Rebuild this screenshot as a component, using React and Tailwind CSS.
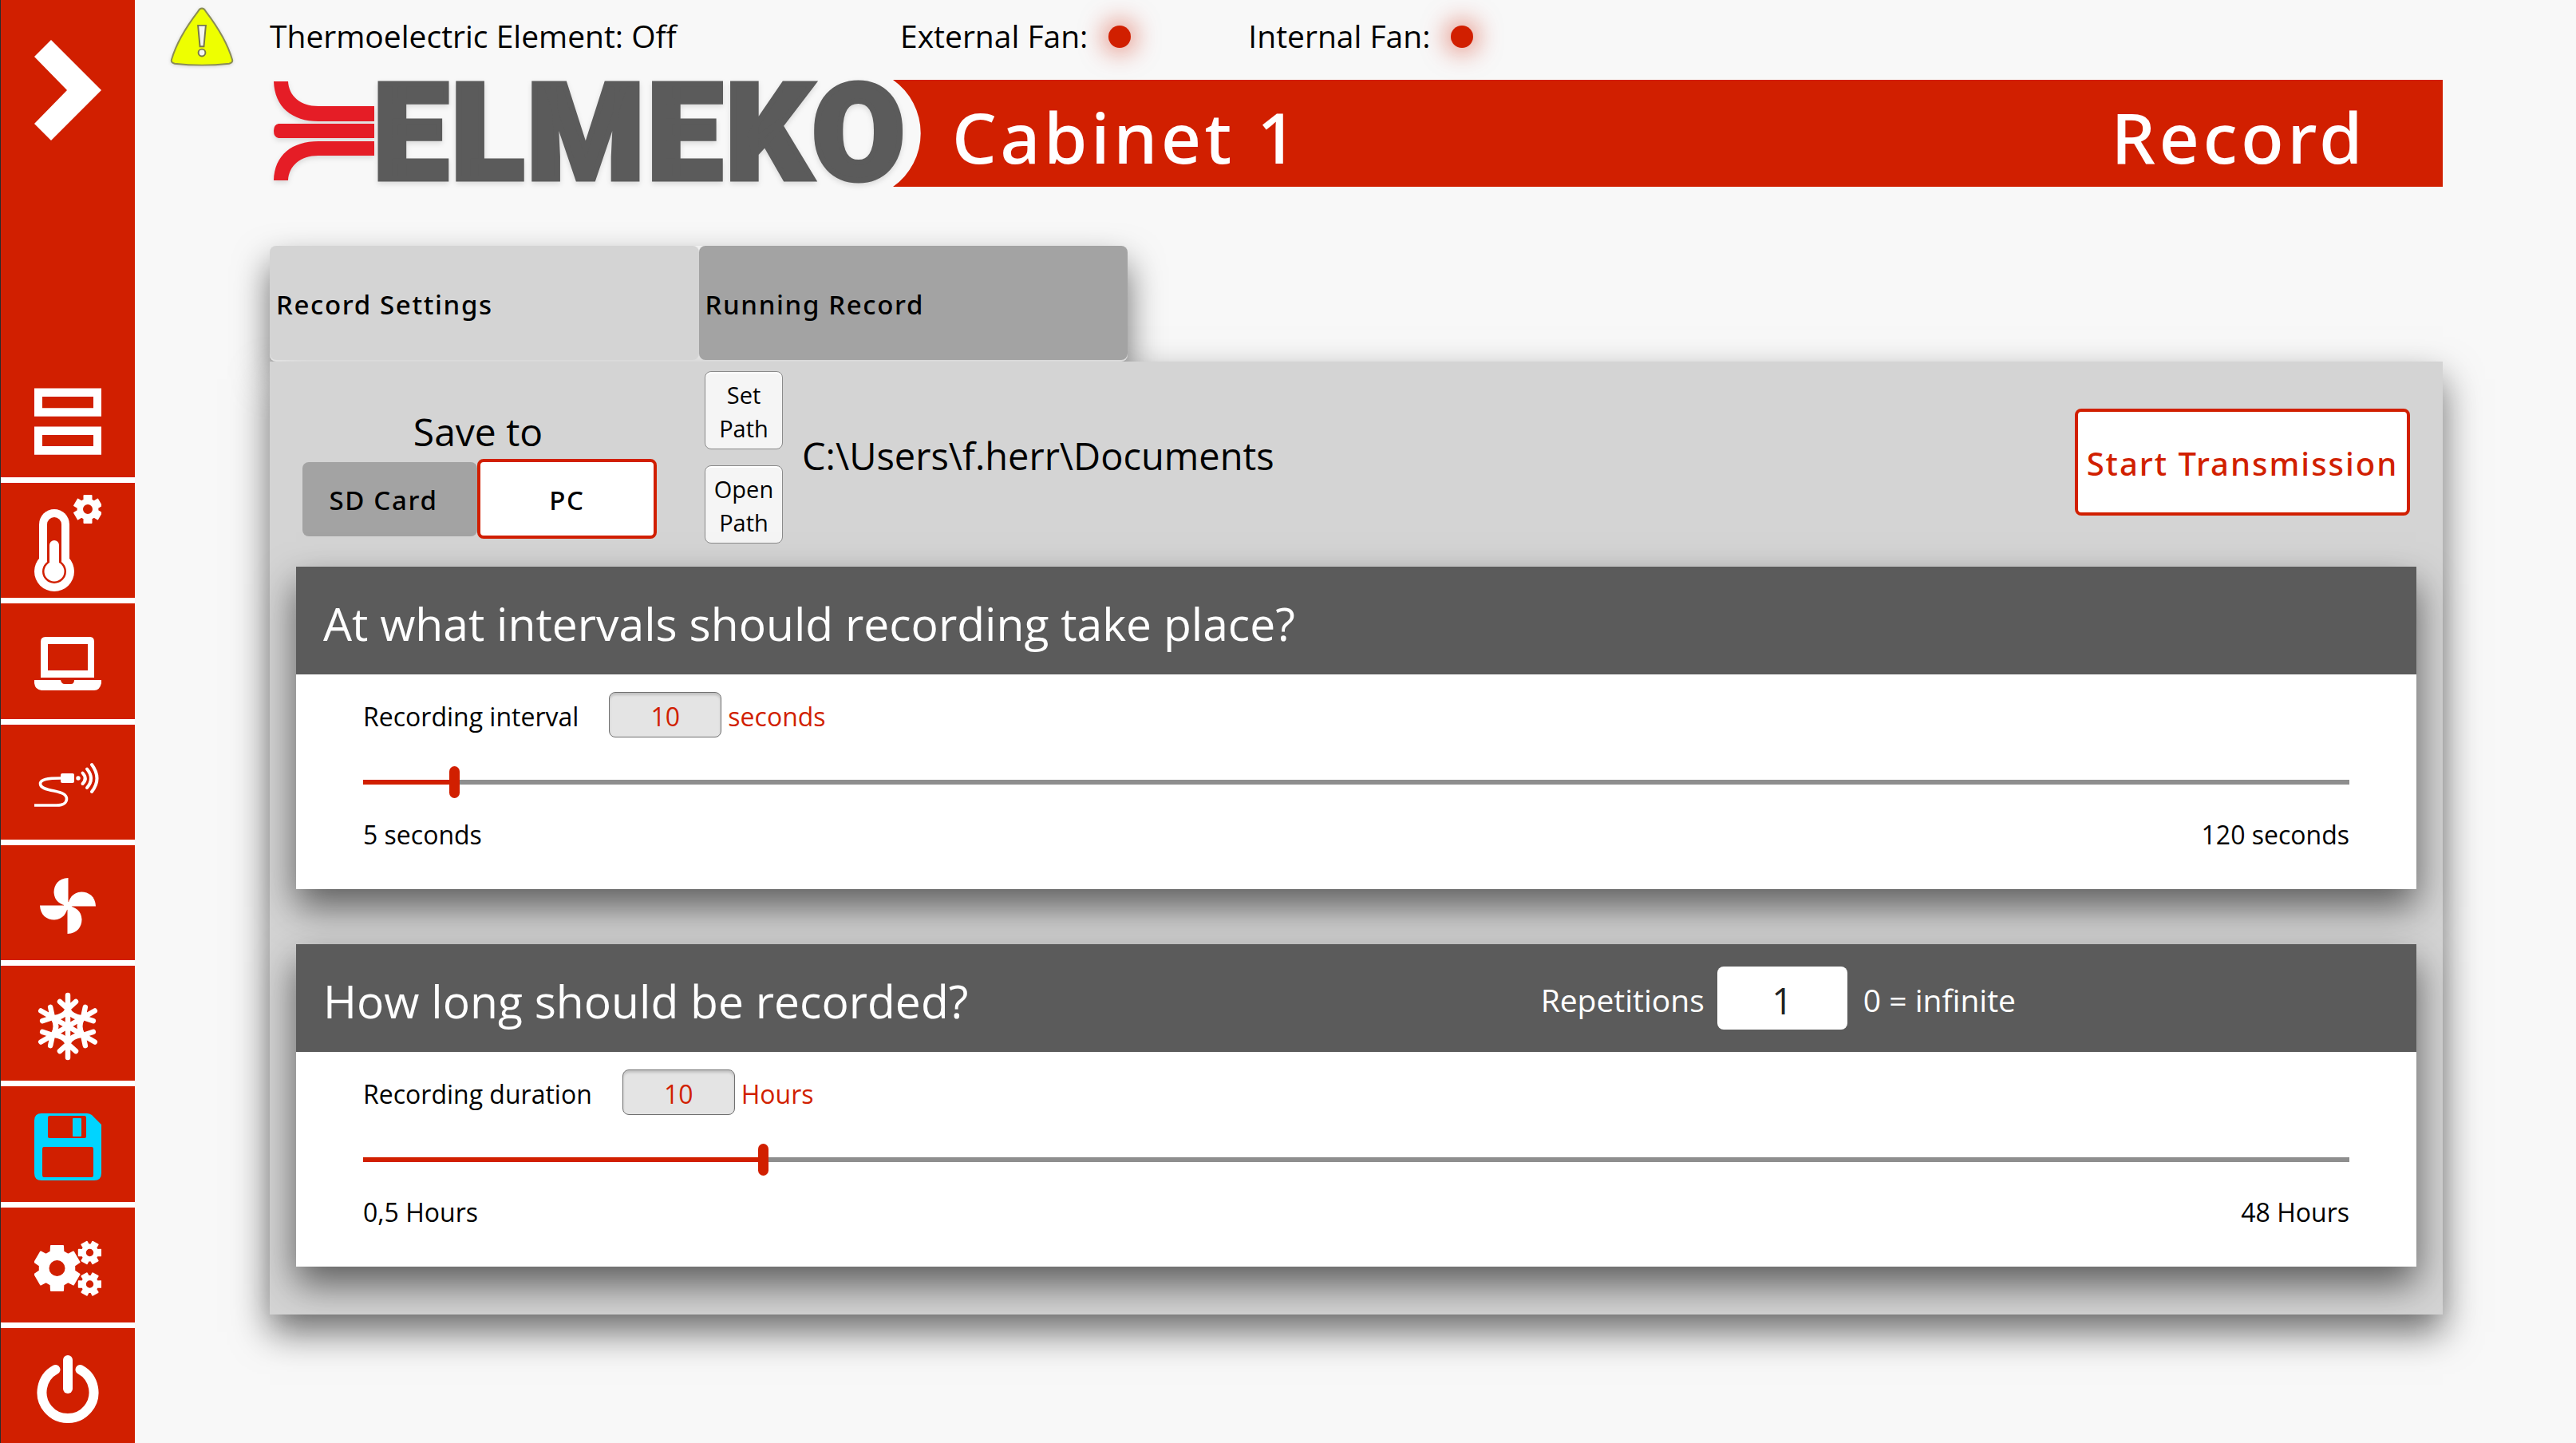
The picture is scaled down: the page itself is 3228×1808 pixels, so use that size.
import { useState } from "react";

const rad = (deg) => (deg * Math.PI) / 180;

// Six-toothed gear outline with a round hole in the middle.
function gearPath(cx, cy, outer, body, hole, start) {
  const points = [];
  for (let i = 0; i < 6; i += 1) {
    const a = start + i * 60;
    [
      [a - 21, body],
      [a - 15, outer],
      [a + 15, outer],
      [a + 21, body],
    ].forEach(([deg, r]) => {
      points.push(`${(cx + r * Math.cos(rad(deg))).toFixed(2)} ${(cy + r * Math.sin(rad(deg))).toFixed(2)}`);
    });
  }
  return `M${points.join("L")}Z M${cx - hole} ${cy}a${hole} ${hole} 0 1 0 ${hole * 2} 0a${hole} ${hole} 0 1 0 ${-hole * 2} 0Z`;
}

function Gear({ cx, cy, outer, body, hole, start }) {
  return (
    <path
      d={gearPath(cx, cy, outer - 1, body - 1, hole + 1, start)}
      fillRule="evenodd"
      fill="currentColor"
      stroke="currentColor"
      strokeWidth="2"
      strokeLinejoin="round"
    />
  );
}

function Icon({ children }) {
  return (
    <svg viewBox="0 0 84 126" className="h-[126px] w-[84px]" fill="none" aria-hidden="true">
      {children}
    </svg>
  );
}

function OverviewIcon() {
  return (
    <Icon>
      <path fill="currentColor" fillRule="evenodd" d="M0 21H84V51H0Z M10 30V42H74V30Z M0 62H84V92H0Z M10 71V83H74V71Z" transform="translate(0 -3) scale(1 1.17)" />
    </Icon>
  );
}

function ThermometerIcon() {
  return (
    <Icon>
      <g fill="currentColor">
        <rect x="6" y="20" width="38" height="90" rx="19" />
        <circle cx="25" cy="98" r="25" />
      </g>
      <g fill="#d11f00">
        <rect x="16" y="30" width="18" height="64" rx="9" />
        <circle cx="25" cy="98" r="15" />
      </g>
      <g fill="currentColor">
        <rect x="19" y="59" width="12" height="40" rx="6" />
        <circle cx="25" cy="98" r="12.500" />
      </g>
      <Gear cx={67} cy={20} outer={18.5} body={13.500} hole={6} start={-90} />
    </Icon>
  );
}

function LaptopIcon() {
  return (
    <Icon>
      <path
        fill="currentColor"
        fillRule="evenodd"
        d="M14 29H70Q75 29 75 35V80H8V35Q8 29 14 29Z M17 38V71H67V38Z"
      />
      <path
        fill="currentColor"
        d="M0 83H33Q34 88 38 88H46Q50 88 50 83H84V87Q82 96 75 96H9Q1 95 0 87Z"
      />
    </Icon>
  );
}

function SensorIcon() {
  return (
    <Icon>
      <path
        d="M0 88H28C37 88 40.500 84 40.500 80C40.500 74 34 72 25 70C14 68 7.500 66 7.500 61C7.500 55.500 16 54 33 54"
        stroke="currentColor"
        strokeWidth="3.600"
      />
      <rect x="33" y="48" width="17" height="12" rx="2" fill="currentColor" />
      <circle cx="55" cy="54" r="2.700" fill="currentColor" />
      <g stroke="currentColor" strokeWidth="4" strokeLinecap="round">
        <path d="M60.500 47.500Q67 54.500 60.500 61" />
        <path d="M66 42.500Q76 54.500 66 66" />
        <path d="M72 37Q85 54.500 72 71" />
      </g>
    </Icon>
  );
}

function FanIcon() {
  const blade = "M42.500 63V28C30 28.500 24.500 37 24.500 46C25 57 33 62 42 63Z";
  return (
    <Icon>
      {[0, 90, 180, 270].map((turn) => (
        <path key={turn} d={blade} fill="currentColor" transform={`rotate(${turn} 42 63)`} />
      ))}
      <circle cx="42" cy="63" r="5" fill="currentColor" />
    </Icon>
  );
}

function SnowflakeIcon() {
  return (
    <Icon>
      <g stroke="currentColor" strokeWidth="6.500" strokeLinecap="round">
        {[0, 60, 120, 180, 240, 300].map((turn) => (
          <path key={turn} d="M42 63V24M42 41L32 32M42 41L52 32" transform={`rotate(${turn} 42 63)`} />
        ))}
        <path
          d="M42 42Q46 51 60 52.500Q54 63 60 73.500Q46 75 42 84Q38 75 24 73.500Q30 63 24 52.500Q38 51 42 42Z"
          strokeWidth="7"
          strokeLinejoin="round"
        />
      </g>
    </Icon>
  );
}

function SaveIcon() {
  return (
    <Icon>
      <path
        fill="currentColor"
        fillRule="evenodd"
        d="M9 21H66Q69 21 72 23L84 35V96Q84 105 75 105H9Q0 105 0 96V30Q0 21 9 21Z M19 24Q17 24 17 27V50Q17 52 19 52H63Q65 52 65 50V27Q65 24 63 24Z M12 63Q10 63 10 66V98Q10 101 12 101H72Q74 101 74 98V66Q74 63 72 63Z"
      />
      <rect x="48" y="27" width="11" height="23" rx="1" fill="currentColor" />
    </Icon>
  );
}

function SettingsIcon() {
  return (
    <Icon>
      <Gear cx={28.5} cy={63} outer={30} body={23} hole={10} start={-90} />
      <Gear cx={69.5} cy={43.5} outer={15.200} body={11} hole={4.7} start={0} />
      <Gear cx={69.5} cy={83} outer={15.200} body={11} hole={4.7} start={0} />
    </Icon>
  );
}

function PowerIcon() {
  return (
    <Icon>
      <g stroke="currentColor" strokeWidth="12" strokeLinecap="round">
        <path d="M26.500 39A32.500 32.500 0 1 0 57.500 39" />
        <path d="M42 27V63" />
      </g>
    </Icon>
  );
}

const navItems = [
  { label: "Temperature settings", icon: ThermometerIcon },
  { label: "Computer", icon: LaptopIcon },
  { label: "Sensors", icon: SensorIcon },
  { label: "Fans", icon: FanIcon },
  { label: "Cooling", icon: SnowflakeIcon },
  { label: "Record", icon: SaveIcon, active: true },
  { label: "Settings", icon: SettingsIcon },
  { label: "Power", icon: PowerIcon },
];

function Sidebar() {
  return (
    <aside className="flex w-[169px] shrink-0 flex-col justify-between border-l border-[#2b2b2b] bg-[#d11f00] text-white">
      <button type="button" aria-label="Expand menu" className="flex h-[225px] items-center justify-center">
        <svg viewBox="0 0 84 126" className="h-[126px] w-[84px]" aria-hidden="true">
          <path d="M21 0L84 63L21 126L0 105L41 63L0 21Z" fill="currentColor" />
        </svg>
      </button>
      <nav className="flex h-[1363px] flex-col">
        <button type="button" aria-label="Overview" className="flex h-[153px] items-center justify-center pt-3">
          <OverviewIcon />
        </button>
        {navItems.map(({ label, icon: Glyph, active }) => (
          <button
            key={label}
            type="button"
            aria-label={label}
            className={
              active
                ? "flex min-h-0 flex-1 items-center justify-center border-t-[7px] border-white pt-2 text-[#00d4ff]"
                : "flex min-h-0 flex-1 items-center justify-center border-t-[7px] border-white pt-2"
            }
          >
            <Glyph />
          </button>
        ))}
      </nav>
    </aside>
  );
}

function WarningIcon() {
  return (
    <svg viewBox="0 0 82 78" className="h-[77px] w-20 drop-shadow-sm" role="img" aria-label="Warning">
      <path
        d="M41 2Q44 2 46 6Q72 40 80 68Q81 72 76 73Q41 77 6 73Q1 72 2 68Q10 40 36 6Q38 2 41 2Z"
        fill="#eeff00"
        stroke="#8a8c55"
        strokeWidth="2"
      />
      <path d="M36 24H46L43.500 51H38.500Z" fill="#f4f4f4" stroke="#77784a" strokeWidth="2" />
      <circle cx="41" cy="59" r="4.500" fill="#f4f4f4" stroke="#77784a" strokeWidth="2" />
    </svg>
  );
}

function FanStatus({ label }) {
  return (
    <div className="flex items-center gap-[26px]">
      <span className="pb-1">{label}</span>
      <span className="size-7 rounded-full bg-[#d11f00] shadow-[0_0_32px_4px_rgba(209,31,0,0.6)]" />
    </div>
  );
}

function Logo() {
  return (
    <svg viewBox="0 0 781 134" className="h-[134px] w-[781px] shrink-0 overflow-visible drop-shadow-md" role="img" aria-label="ELMEKO">
      <g fill="#e51d26">
        <path d="M5 2H23C24 20 38 33 61 33H131V52H61C28 52 6 34 5 2Z" />
        <path d="M11 55H131V73H11Q5 72 5 64Q5 56 11 55Z" />
        <path d="M5 126H23C24 108 38 95 61 95H131V77H61C28 77 6 94 5 126Z" />
      </g>
      <text
        x="130"
        y="124"
        fill="#5b5b5b"
        stroke="#5b5b5b"
        strokeWidth="7"
        fontFamily="Roboto, sans-serif"
        fontWeight="900"
        fontSize="167"
      >
        ELMEKO
      </text>
    </svg>
  );
}

function Header() {
  return (
    <header className="flex font-['Noto_Sans','Open_Sans',sans-serif] text-[88px] font-medium leading-none tracking-wider text-white">
      <Logo />
      <svg viewBox="0 0 36 134" className="h-[134px] w-9 shrink-0" aria-hidden="true">
        <path d="M0 0H36V134H0A82 82 0 0 0 0 0Z" fill="#d11f00" />
      </svg>
      <div className="flex min-w-0 flex-1 items-center justify-between bg-[#d11f00] pt-2 pr-24 pl-[38px]">
        <span>Cabinet 1</span>
        <h1>Record</h1>
      </div>
    </header>
  );
}

const cardShadow = "shadow-[0_22px_44px_rgba(0,0,0,0.56)]";

function Card({ title, extra, children }) {
  return (
    <section className={`${cardShadow} bg-white`}>
      <div className="flex h-[135px] items-center bg-[#5b5b5b] px-[34px] text-white">
        <h2 className="pt-2 text-[57px] leading-none">{title}</h2>
        {extra}
      </div>
      {children}
    </section>
  );
}

function RangeField({ id, label, unit, min, max, step, value, onChange, minLabel, maxLabel }) {
  const percent = ((value - min) / (max - min)) * 100;
  return (
    <div className="px-[84px] pt-[22px] pb-11 text-[32px] text-black">
      <div className="flex h-[57px] items-center">
        <label htmlFor={id} className="pt-1">
          {label}
        </label>
        <input
          type="text"
          aria-label={`${label} value`}
          value={value}
          onChange={(event) => onChange(Number(event.target.value) || min)}
          className="ml-[38px] h-[57px] w-[141px] rounded-lg border border-[#707070] bg-[#e4e4e4] pt-1 text-center text-[#d11f00] shadow-[inset_0_3px_3px_rgba(0,0,0,0.15)]"
        />
        <span className="ml-2 pt-1 text-[#d11f00]">{unit}</span>
      </div>
      <input
        id={id}
        type="range"
        min={min}
        max={max}
        step={step}
        value={value}
        onChange={(event) => onChange(Number(event.target.value))}
        style={{ backgroundImage: `linear-gradient(to right, #d11f00 ${percent}%, #8e8e8e ${percent}%)` }}
        className="mt-9 block h-10 w-full appearance-none bg-[length:100%_6px] bg-center bg-no-repeat [&::-webkit-slider-thumb]:h-10 [&::-webkit-slider-thumb]:w-[13px] [&::-webkit-slider-thumb]:appearance-none [&::-webkit-slider-thumb]:rounded-full [&::-webkit-slider-thumb]:bg-[#d11f00]"
      />
      <div className="mt-[22px] flex justify-between leading-[48px]">
        <span>{minLabel}</span>
        <span>{maxLabel}</span>
      </div>
    </div>
  );
}

const pathButton =
  "h-[98px] w-[98px] rounded-lg border border-[#8a8a8a] bg-[#f5f5f5] pt-1 text-[29px] leading-[42px] text-black shadow-[inset_0_2px_0_#ffffff]";

export default function App() {
  const [interval, setInterval] = useState(10);
  const [duration, setDuration] = useState(10);
  const [repetitions, setRepetitions] = useState("1");

  return (
    <div className="flex min-h-screen bg-[#f8f8f8] font-['Open_Sans','Noto_Sans',sans-serif] text-black">
      <Sidebar />
      <main className="min-w-0 flex-1 pr-[167px] pl-11">
        <div className="flex h-[92px] items-center text-[39px] leading-none">
          <WarningIcon />
          <span className="ml-[45px] w-[790px] pb-1">Thermoelectric Element: Off</span>
          <div className="flex gap-[147px]">
            <FanStatus label="External Fan:" />
            <FanStatus label="Internal Fan:" />
          </div>
        </div>

        <div className="pt-2 pl-[125px]">
          <Header />

          <div
            className="mt-[74px] flex w-[1075px] max-w-full rounded-lg bg-[#f0f0f0] pb-[2px] font-['Noto_Sans','Open_Sans',sans-serif] text-[33px] font-medium tracking-wider shadow-[0_22px_44px_rgba(0,0,0,0.56)]"
            role="tablist"
          >
            <button type="button" role="tab" aria-selected="true" className="h-[143px] flex-1 rounded-lg bg-[#d4d4d4] pt-1 pl-2 text-left">
              Record Settings
            </button>
            <button type="button" role="tab" aria-selected="false" className="h-[143px] flex-1 rounded-lg bg-[#a3a3a3] pt-1 pl-2 text-left">
              Running Record
            </button>
          </div>

          <div className={`${cardShadow} bg-[#d4d4d4] px-[33px] pb-[60px]`}>
            <div className="flex items-center pt-3 pr-2 pb-[29px] pl-2">
              <div className="pt-9" role="group" aria-labelledby="save-to">
                <div id="save-to" className="pr-1 text-center text-[48px] leading-[68px]">
                  Save to
                </div>
                <div className="flex items-center font-['Noto_Sans','Open_Sans',sans-serif] text-[33px] font-medium tracking-wider">
                  <button type="button" aria-pressed="false" className="h-[93px] w-[219px] rounded-lg bg-[#a3a3a3] pt-1 pr-4">
                    SD Card
                  </button>
                  <button type="button" aria-pressed="true" className="h-[100px] w-[225px] rounded-lg border-4 border-[#d11f00] bg-white pt-1">
                    PC
                  </button>
                </div>
              </div>
              <div className="ml-[60px] flex flex-col gap-5">
                <button type="button" className={pathButton}>
                  Set
                  <br />
                  Path
                </button>
                <button type="button" className={pathButton}>
                  Open
                  <br />
                  Path
                </button>
              </div>
              <span className="ml-6 pb-1 text-[47px] leading-none">C:\Users\f.herr\Documents</span>
              <button
                type="button"
                className="mt-3 ml-auto h-[134px] w-[420px] rounded-lg border-4 border-[#d11f00] bg-white pt-1 font-['Noto_Sans','Open_Sans',sans-serif] text-[40px] font-medium tracking-wider whitespace-nowrap text-[#d11f00]"
              >
                Start Transmission
              </button>
            </div>

            <div className="flex flex-col gap-[69px]">
              <Card title="At what intervals should recording take place?">
                <RangeField
                  id="recording-interval"
                  label="Recording interval"
                  unit="seconds"
                  min={5}
                  max={120}
                  step={1}
                  value={interval}
                  onChange={setInterval}
                  minLabel="5 seconds"
                  maxLabel="120 seconds"
                />
              </Card>
              <Card
                title="How long should be recorded?"
                extra={
                  <div className="mr-[468px] ml-auto flex items-center text-[39px] leading-none">
                    <label htmlFor="repetitions" className="pt-1">
                      Repetitions
                    </label>
                    <input
                      id="repetitions"
                      type="text"
                      value={repetitions}
                      onChange={(event) => setRepetitions(event.target.value)}
                      className="mr-5 ml-4 h-[79px] w-[163px] rounded-lg bg-white pt-1 text-center text-[46px] text-[#222222]"
                    />
                    <span className="pt-1">0 = infinite</span>
                  </div>
                }
              >
                <RangeField
                  id="recording-duration"
                  label="Recording duration"
                  unit="Hours"
                  min={0.5}
                  max={48}
                  step={0.5}
                  value={duration}
                  onChange={setDuration}
                  minLabel="0,5 Hours"
                  maxLabel="48 Hours"
                />
              </Card>
            </div>
          </div>
        </div>
      </main>
    </div>
  );
}
